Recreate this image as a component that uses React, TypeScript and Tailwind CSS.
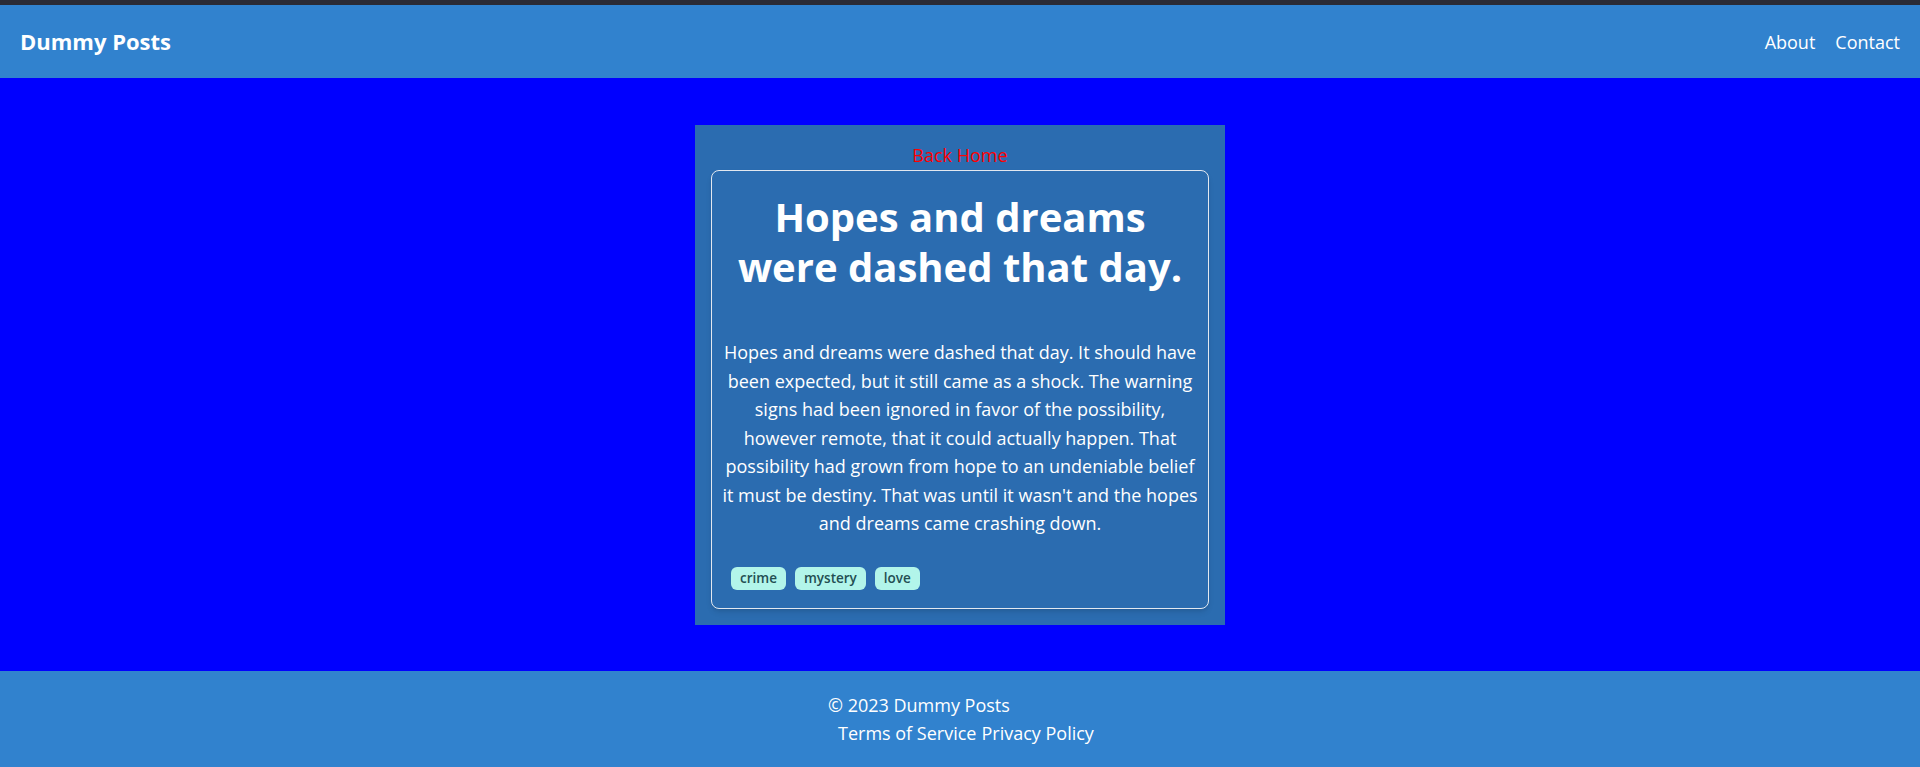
import React from "react";

const tags = ["crime", "mystery", "love"];

const body =
  "Hopes and dreams were dashed that day. It should have been expected, but it still came as a shock. The warning signs had been ignored in favor of the possibility, however remote, that it could actually happen. That possibility had grown from hope to an undeniable belief it must be destiny. That was until it wasn't and the hopes and dreams came crashing down.";

const App = () => {
  return (
    <div className="min-h-screen flex flex-col font-['Open_Sans',sans-serif] text-white">
      <div className="h-[5px] bg-[#2b2b35]" />
      <header className="h-[73px] bg-[#3182ce] flex items-center justify-between px-5">
        <h1 className="text-[22px] font-bold">Dummy Posts</h1>
        <nav className="flex gap-5 text-lg">
          <a href="#">About</a>
          <a href="#">Contact</a>
        </nav>
      </header>

      <main className="bg-[#0000ff] h-[593px] pt-[47px] flex justify-center items-start">
        <div className="w-[530px] h-[500px] bg-[#2b6cb0] p-4 flex flex-col items-center">
          <a href="#" className="text-lg leading-7 text-[#ff0000]">
            Back Home
          </a>
          <div className="w-full flex-1 mt-px border border-[#e2e8f0] rounded-lg shadow-md px-[10px] pt-[21px] flex flex-col">
            <h2 className="text-[40px] leading-[50px] font-bold text-center">
              Hopes and dreams were dashed that day.
            </h2>
            <p className="mt-[46px] text-lg leading-[28.5px] text-center">{body}</p>
            <div className="flex gap-[9px] mt-[29px] pl-[9px]">
              {tags.map((t) => (
                <span
                  key={t}
                  className="h-[23px] px-[9px] rounded-md bg-[#b2f5ea] text-[#234e52] text-[13.5px] font-semibold flex items-center"
                >
                  {t}
                </span>
              ))}
            </div>
          </div>
        </div>
      </main>

      <footer className="flex-1 bg-[#3182ce] pt-5 text-lg leading-7">
        <p className="pl-[828px]">© 2023 Dummy Posts</p>
        <div className="pl-[838px] flex gap-[5px]">
          <a href="#">Terms of Service</a>
          <a href="#">Privacy Policy</a>
        </div>
      </footer>
    </div>
  );
};

export default App;
